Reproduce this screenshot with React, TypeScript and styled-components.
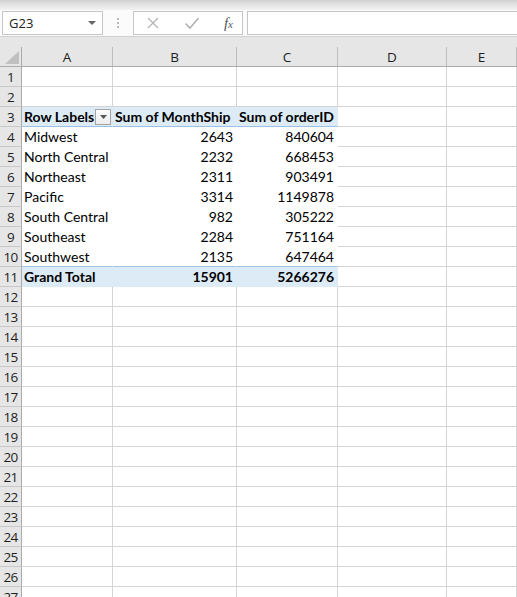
import React from "react";
import styled, { createGlobalStyle } from "styled-components";

type PivotRow = { label: string; months: number; orders: number };

const PIVOT: PivotRow[] = [
  { label: "Midwest", months: 2643, orders: 840604 },
  { label: "North Central", months: 2232, orders: 668453 },
  { label: "Northeast", months: 2311, orders: 903491 },
  { label: "Pacific", months: 3314, orders: 1149878 },
  { label: "South Central", months: 982, orders: 305222 },
  { label: "Southeast", months: 2284, orders: 751164 },
  { label: "Southwest", months: 2135, orders: 647464 },
];

const COLUMNS = ["A", "B", "C", "D", "E"];
const ROW_COUNT = 27;
const GRID_COLS = "22px 91px 124px 101px 109px 1fr";

export default function App() {
  const totalMonths = PIVOT.reduce((s, r) => s + r.months, 0);
  const totalOrders = PIVOT.reduce((s, r) => s + r.orders, 0);

  const renderRow = (n: number) => {
    // row 3 = pivot header, 4..10 = data, 11 = grand total
    if (n === 3) {
      return (
        <Row key={n}>
          <RowHead>{n}</RowHead>
          <Cell $kind="head">
            <HeadLabel>Row Labels</HeadLabel>
            <FilterBtn>
              <svg width="7" height="4" viewBox="0 0 7 4">
                <path d="M0 0h7L3.5 4z" fill="#555" />
              </svg>
            </FilterBtn>
          </Cell>
          <Cell $kind="head">Sum of MonthShip</Cell>
          <Cell $kind="head">Sum of orderID</Cell>
          <Cell />
          <Cell />
        </Row>
      );
    }
    if (n >= 4 && n <= 10) {
      const r = PIVOT[n - 4];
      return (
        <Row key={n}>
          <RowHead>{n}</RowHead>
          <Cell $kind="data">{r.label}</Cell>
          <Cell $kind="data" $num>
            {r.months}
          </Cell>
          <Cell $kind="data" $num>
            {r.orders}
          </Cell>
          <Cell />
          <Cell />
        </Row>
      );
    }
    if (n === 11) {
      return (
        <Row key={n}>
          <RowHead>{n}</RowHead>
          <Cell $kind="total">Grand Total</Cell>
          <Cell $kind="total" $num>
            {totalMonths}
          </Cell>
          <Cell $kind="total" $num>
            {totalOrders}
          </Cell>
          <Cell />
          <Cell />
        </Row>
      );
    }
    return (
      <Row key={n}>
        <RowHead>{n}</RowHead>
        {COLUMNS.map((c) => (
          <Cell key={c} />
        ))}
      </Row>
    );
  };

  return (
    <>
      <GlobalStyle />
      <Window>
        <TopStrip />
        <FormulaBar>
          <NameBox>
            <span>G23</span>
            <svg width="8" height="4" viewBox="0 0 8 4">
              <path d="M0 0h8L4 4z" fill="#666" />
            </svg>
          </NameBox>
          <Dots>
            <i />
            <i />
            <i />
          </Dots>
          <FxButtons>
            <svg width="14" height="14" viewBox="0 0 14 14">
              <path
                d="M2 2l10 10M12 2L2 12"
                stroke="#b4b4b4"
                strokeWidth="1.3"
                fill="none"
              />
            </svg>
            <svg width="16" height="14" viewBox="0 0 16 14">
              <path
                d="M1.5 7.5l4.5 4.5L14.5 2"
                stroke="#b4b4b4"
                strokeWidth="1.6"
                fill="none"
              />
            </svg>
            <FxLabel>
              f<sub>x</sub>
            </FxLabel>
          </FxButtons>
          <FormulaInput />
        </FormulaBar>

        <Sheet>
          <HeaderRow>
            <Corner>
              <svg width="14" height="13" viewBox="0 0 14 13">
                <path d="M14 0v13H0z" fill="#c0c0c0" />
              </svg>
            </Corner>
            {COLUMNS.map((c) => (
              <ColHead key={c}>{c}</ColHead>
            ))}
          </HeaderRow>
          {Array.from({ length: ROW_COUNT }, (_, i) => renderRow(i + 1))}
        </Sheet>
      </Window>
    </>
  );
}

const GlobalStyle = createGlobalStyle`
  html, body {
    margin: 0;
    padding: 0;
    background: #fff;
    overflow: hidden;
  }
  * { box-sizing: border-box; }
`;

const Window = styled.div`
  width: 517px;
  height: 597px;
  overflow: hidden;
  display: flex;
  flex-direction: column;
  font-family: Lato, "Liberation Sans", sans-serif;
`;

const TopStrip = styled.div`
  flex-shrink: 0;
  height: 10px;
  background: linear-gradient(#d0d0d0, #e4e4e4 50%, #f2f2f2);
`;

const FormulaBar = styled.div`
  flex-shrink: 0;
  height: 27px;
  display: flex;
  align-items: flex-start;
  padding: 1px 0 0 2px;
  background: #fbfbfb;
  border-bottom: 1px solid #d0d0d0;
`;

const NameBox = styled.div`
  width: 101px;
  height: 24px;
  border: 1px solid #c6c6c6;
  background: #fff;
  display: flex;
  align-items: center;
  justify-content: space-between;
  padding: 0 6px 0 6px;
  font-family: "Open Sans", "Liberation Sans", sans-serif;
  font-size: 13px;
  color: #222;
`;

const Dots = styled.div`
  width: 30px;
  height: 24px;
  display: flex;
  flex-direction: column;
  align-items: center;
  justify-content: center;
  gap: 2px;

  i {
    width: 2px;
    height: 2px;
    background: #b8b8b8;
  }
`;

const FxButtons = styled.div`
  width: 110px;
  height: 24px;
  border: 1px solid #c6c6c6;
  background: #fff;
  display: flex;
  align-items: center;
  justify-content: space-between;
  padding: 0 9px 0 12px;
`;

const FxLabel = styled.span`
  font-family: "Liberation Serif", "DejaVu Serif", serif;
  font-style: italic;
  font-size: 15px;
  color: #555;
  line-height: 1;

  sub {
    font-size: 11px;
    vertical-align: 0;
  }
`;

const FormulaInput = styled.div`
  flex: 1;
  height: 24px;
  margin-left: 4px;
  border: 1px solid #c6c6c6;
  border-right: none;
  background: #fff;
`;

const Sheet = styled.div`
  flex: 1;
  min-height: 0;
  background: #fff;
`;

const HeaderRow = styled.div`
  display: grid;
  grid-template-columns: ${GRID_COLS};
  height: 30px;
  padding-top: 10px;
  background: #e6e6e6;
  border-bottom: 1px solid #ababab;
`;

const Corner = styled.div`
  display: flex;
  align-items: flex-end;
  justify-content: flex-end;
  padding: 0 2px 2px 0;
  border-right: 1px solid #ababab;
`;

const ColHead = styled.div`
  display: flex;
  align-items: center;
  justify-content: center;
  border-right: 1px solid #bdbdbd;
  font-family: "Open Sans", "Liberation Sans", sans-serif;
  font-size: 13.5px;
  color: #1e1e1e;
`;

const Row = styled.div`
  display: grid;
  grid-template-columns: ${GRID_COLS};
  height: 20px;
`;

const RowHead = styled.div`
  background: #e6e6e6;
  border-right: 1px solid #ababab;
  border-bottom: 1px solid #c8c8c8;
  display: flex;
  align-items: center;
  justify-content: center;
  font-family: "Open Sans", "Liberation Sans", sans-serif;
  font-size: 13.5px;
  color: #1e1e1e;
  letter-spacing: -0.6px;
`;

type CellKind = "head" | "data" | "total";

const Cell = styled.div<{ $kind?: CellKind; $num?: boolean }>`
  display: flex;
  align-items: center;
  justify-content: ${(p) => (p.$num ? "flex-end" : "flex-start")};
  padding: 0 3px 0 2px;
  white-space: nowrap;
  overflow: visible;
  font-size: 14px;
  color: #000;
  font-weight: ${(p) => (p.$kind === "head" || p.$kind === "total" ? 700 : 400)};
  background: ${(p) =>
    p.$kind === "head" || p.$kind === "total" ? "#ddebf7" : "#fff"};
  border-right: 1px solid ${(p) => (p.$kind ? "transparent" : "#d4d4d4")};
  border-bottom: 1px solid
    ${(p) =>
      p.$kind === "head" ? "#9bc2e6" : p.$kind ? "transparent" : "#d4d4d4"};
  border-top: ${(p) => (p.$kind === "total" ? "1px solid #9bc2e6" : "none")};
  margin-top: ${(p) => (p.$kind === "total" ? "-1px" : "0")};
  height: ${(p) => (p.$kind === "total" ? "21px" : "20px")};
`;

const HeadLabel = styled.span`
  flex: 1;
`;

const FilterBtn = styled.div`
  width: 16px;
  height: 16px;
  border: 1px solid #a6a6a6;
  background: linear-gradient(#fdfdfd, #ececec);
  display: flex;
  align-items: center;
  justify-content: center;
  margin-right: -2px;
`;
